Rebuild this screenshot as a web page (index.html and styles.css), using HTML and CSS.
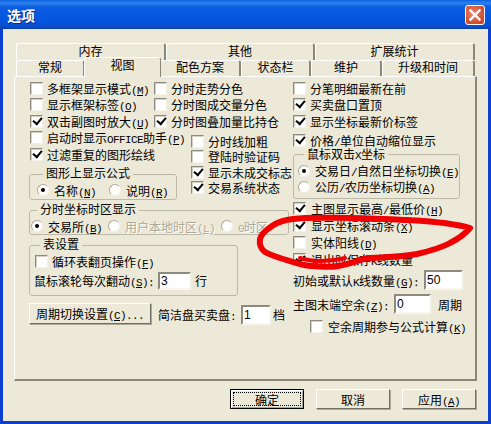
FILE: index.html
```html
<!DOCTYPE html>
<html lang="zh-CN">
<head>
    <meta charset="UTF-8">
    <title>选项</title>
    <link rel="stylesheet" href="styles.css">
</head>
<body>
    <div class="window">
        <div class="titlebar">
            <span class="title">选项</span>
            <span class="close">
                <svg width="20" height="20" viewBox="0 0 20 20"><path d="M5.5 5.5L14.5 14.5M14.5 5.5L5.5 14.5" stroke="#fff" stroke-width="2.4" stroke-linecap="square"/></svg>
            </span>
        </div>

        <div class="client">
            <div class="tabs tabs-back">
                <div class="tab">内存</div>
                <div class="tab">其他</div>
                <div class="tab">扩展统计</div>
            </div>
            <div class="tabs tabs-front">
                <div class="tab">常规</div>
                <div class="tab active">视图</div>
                <div class="tab">配色方案</div>
                <div class="tab">状态栏</div>
                <div class="tab">维护</div>
                <div class="tab">升级和时间</div>
            </div>

            <div class="panel">
                <div class="col-left">
                    <div class="top-grid">
                        <div class="check"><span class="box"></span><span>多框架显示模式<span class="key">(<u>M</u>)</span></span></div>
                        <div class="check"><span class="box"></span><span>分时走势分色</span></div>
                        <div class="check"><span class="box"></span><span>显示框架标签<span class="key">(<u>O</u>)</span></span></div>
                        <div class="check"><span class="box"></span><span>分时图成交量分色</span></div>
                        <div class="check"><span class="box on"></span><span>双击副图时放大<span class="key">(<u>U</u>)</span></span></div>
                        <div class="check"><span class="box on"></span><span>分时图叠加量比持仓</span></div>
                    </div>

                    <div class="lower">
                        <div class="lower-left">
                            <div class="check"><span class="box"></span><span>启动时显示<span class="key">OFFICE</span>助手<span class="key">(<u>P</u>)</span></span></div>
                            <div class="check"><span class="box on"></span><span>过滤重复的图形绘线</span></div>
                            <fieldset class="group group-formula">
                                <legend>图形上显示公式</legend>
                                <div class="radios">
                                    <div class="radio-item w-name"><span class="radio on"></span><span>名称<span class="key">(<u>N</u>)</span></span></div>
                                    <div class="radio-item"><span class="radio"></span><span>说明<span class="key">(<u>R</u>)</span></span></div>
                                </div>
                            </fieldset>
                        </div>
                        <div class="lower-right">
                            <div class="check"><span class="box"></span><span>分时线加粗</span></div>
                            <div class="check"><span class="box"></span><span>登陆时验证码</span></div>
                            <div class="check"><span class="box on"></span><span>显示未成交标志</span></div>
                            <div class="check"><span class="box on"></span><span>交易系统状态</span></div>
                        </div>
                    </div>

                    <fieldset class="group group-zone">
                        <legend>分时坐标时区显示</legend>
                        <div class="radios">
                            <div class="radio-item w-exch"><span class="radio on"></span><span>交易所<span class="key">(<u>B</u>)</span></span></div>
                            <div class="radio-item w-local disabled"><span class="radio"></span><span>用户本地时区<span class="key">(<u>L</u>)</span></span></div>
                            <div class="radio-item disabled"><span class="radio"></span><span><span class="key">0</span>时区</span></div>
                        </div>
                    </fieldset>

                    <fieldset class="group group-table">
                        <legend>表设置</legend>
                        <div class="check"><span class="box"></span><span>循环表翻页操作<span class="key">(<u>F</u>)</span></span></div>
                        <div class="field-row"><span class="label-wheel">鼠标滚轮每次翻动<span class="key">(<u>S</u>):</span></span><input class="num num-wheel" value="3"><span class="unit">行</span></div>
                    </fieldset>

                    <div class="cycle-row">
                        <button class="btn btn-cycle">周期切换设置<span class="key">(<u>C</u>)...</span></button>
                        <span class="cycle-label">简洁盘买卖盘<span class="key">:</span></span>
                        <input class="num num-depth" value="1">
                        <span class="unit">档</span>
                    </div>
                </div>

                <div class="col-right">
                    <div class="check"><span class="box"></span><span>分笔明细最新在前</span></div>
                    <div class="check"><span class="box on"></span><span>买卖盘口置顶</span></div>
                    <div class="check"><span class="box on"></span><span>显示坐标最新价标签</span></div>
                    <div class="check price"><span class="box on"></span><span>价格<span class="key">/</span>单位自动缩位显示</span></div>

                    <fieldset class="group group-dbl">
                        <legend>鼠标双击<span class="key">X</span>坐标</legend>
                        <div class="radio-item"><span class="radio on"></span><span>交易日<span class="key">/</span>自然日坐标切换<span class="key">(<u>E</u>)</span></span></div>
                        <div class="radio-item"><span class="radio"></span><span>公历<span class="key">/</span>农历坐标切换<span class="key">(<u>A</u>)</span></span></div>
                    </fieldset>

                    <div class="right-checks">
                        <div class="check"><span class="box on"></span><span>主图显示最高<span class="key">/</span>最低价<span class="key">(<u>H</u>)</span></span></div>
                        <div class="check"><span class="box on"></span><span>显示坐标滚动条<span class="key">(<u>X</u>)</span></span></div>
                        <div class="check"><span class="box"></span><span>实体阳线<span class="key">(<u>D</u>)</span></span></div>
                        <div class="check"><span class="box on"></span><span>退出时保存<span class="key">K</span>线数量</span></div>
                    </div>

                    <div class="field-row row-kline"><span class="label-kline">初始或默认<span class="key">K</span>线数量<span class="key">(<u>G</u>):</span></span><input class="num num-kline" value="50"></div>
                    <div class="field-row row-space"><span class="label-space">主图末端空余<span class="key">(<u>Z</u>):</span></span><input class="num num-space" value="0"><span class="unit">周期</span></div>
                    <div class="check row-calc"><span class="box"></span><span>空余周期参与公式计算<span class="key">(<u>K</u>)</span></span></div>
                </div>
            </div>

            <div class="dialog-buttons">
                <button class="btn btn-default"><span class="focus">确定</span></button>
                <button class="btn">取消</button>
                <button class="btn">应用<span class="key">(<u>A</u>)</span></button>
            </div>
        </div>

        <!-- 手绘红圈 -->
        <svg class="scribble" width="491" height="424" viewBox="0 0 491 424">
            <path d="M470 228C450 222 425 221 407 220C385 219 365 218 350 218C330 218 310 217 293 219C283 220 278 222 272 226C266 230 261 234 260 239C259 245 261 249 265 252C272 256 283 259 293 262C300 264 305 266 312 266C320 266 328 268 338 266C350 264 358 260 368 258C385 257 402 257 417 254C430 251 441 248 450 243C458 239 465 234 470 228Z" fill="none" stroke="#f00000" stroke-width="6" stroke-linejoin="round"/>
            <path d="M300 258C312 262 330 262 345 258" fill="none" stroke="#f00000" stroke-width="4" stroke-linecap="round"/>
        </svg>
    </div>
</body>
</html>
```

FILE: styles.css
```css
* {
    box-sizing: border-box;
}

body {
    margin: 0;
    background: #0831d9;
    font-family: "Liberation Sans", "Noto Sans CJK SC", sans-serif;
    font-size: 12px;
    color: #000;
}

.key {
    font-family: "Liberation Mono", monospace;
    font-size: 11px;
    letter-spacing: -0.6px;
}

.window {
    position: relative;
    width: 491px;
    height: 424px;
    overflow: hidden;
    display: flex;
    flex-direction: column;
    background: #0a3fd0;
}

.titlebar {
    height: 29px;
    flex: none;
    display: flex;
    align-items: center;
    justify-content: space-between;
    padding: 0 6px 0 7px;
    background: linear-gradient(to bottom, #0a5fe0 0, #2f83ee 3px, #0a5ce0 7px, #0455e0 20px, #0b4fd0 26px, #0a3fb0 29px);
}

.title {
    font-size: 14px;
    font-weight: bold;
    color: #fff;
    text-shadow: 1px 1px 0 #0a2a8a;
}

.close {
    width: 20px;
    height: 20px;
    margin-top: 1px;
    border: 1px solid #fff;
    border-radius: 3px;
    background: radial-gradient(circle at 40% 40%, #e8866a, #d2472a 75%);
    display: flex;
    align-items: center;
    justify-content: center;
}

.close svg {
    flex: none;
}

.client {
    flex: 1;
    margin: 0 3px 3px;
    padding: 14px 11px 0;
    background: #ece9d8;
    display: flex;
    flex-direction: column;
}

/* 标签页 */
.tabs {
    display: grid;
    margin-left: 2px;
    width: 459px;
}

.tabs-back {
    height: 17px;
    grid-template-columns: 150px 149px 160px;
}

.tabs-front {
    height: 16px;
    grid-template-columns: 69px 75px 81px 70px 71px 93px;
    position: relative;
    z-index: 1;
}

.tab {
    display: flex;
    align-items: center;
    justify-content: center;
    line-height: 13px;
    background: #ece9d8;
    border-top: 1px solid #fff;
    border-left: 1px solid #fff;
    border-right: 2px solid #8a8778;
    border-radius: 3px 3px 0 0;
}

.tab.active {
    margin: -3px -1px -1px -1px;
    border-right: 1px solid #8a8778;
    padding-bottom: 3px;
    position: relative;
}

.panel {
    width: 463px;
    height: 305px;
    padding: 3px 0 0 14px;
    display: flex;
    gap: 3px;
    border-top: 1px solid #fff;
    border-left: 1px solid #fff;
    border-right: 2px solid #8a8778;
    border-bottom: 2px solid #8a8778;
}

.col-left {
    width: 260px;
    flex: none;
}

.col-right {
    flex: 1;
    min-width: 0;
}

/* 复选框 */
.check {
    height: 16.5px;
    display: flex;
    align-items: center;
    white-space: nowrap;
    padding-left: 1px;
}

.box {
    position: relative;
    flex: none;
    width: 13px;
    height: 13px;
    margin-right: 4px;
    background: #fff;
    border: 1px solid;
    border-color: #8d8b80 #f4f2e8 #f4f2e8 #8d8b80;
    box-shadow: inset 1px 1px 0 #d4d0c4;
}

.box.on::after {
    content: "";
    position: absolute;
    left: 2px;
    top: 1px;
    width: 7px;
    height: 4px;
    border-left: 2px solid #000;
    border-bottom: 2px solid #000;
    transform: rotate(-50deg);
}

.radio {
    position: relative;
    flex: none;
    width: 12px;
    height: 12px;
    margin-right: 5px;
    border-radius: 50%;
    background: #fff;
    border: 1px solid;
    border-color: #aca899 #f4f2e8 #f4f2e8 #aca899;
}

.radio.on::after {
    content: "";
    position: absolute;
    left: 3px;
    top: 3px;
    width: 4px;
    height: 4px;
    border-radius: 50%;
    background: #000;
}

.radio-item {
    height: 16px;
    display: flex;
    align-items: center;
    white-space: nowrap;
}

.radio-item.disabled {
    color: #aca899;
    text-shadow: 1px 1px 0 #fff;
}

.radios {
    display: flex;
}

/* 左栏 */
.top-grid {
    display: grid;
    grid-template-columns: 124px 1fr;
}

.lower {
    display: flex;
}

.lower-left {
    width: 161px;
    flex: none;
}

.lower-right {
    padding-top: 4px;
}

.lower-right .check {
    height: 15.5px;
}

.group {
    margin: 0;
    padding: 0;
    min-width: 0;
    border: 1px solid #bdb9a8;
    border-radius: 3px;
}

.group legend {
    margin-left: 6px;
    padding: 0 3px;
    line-height: 16px;
    height: 16px;
    white-space: nowrap;
}

.group-formula {
    width: 148px;
    margin-top: 3.5px;
    padding: 0 0 1px 7px;
}

.w-name {
    width: 72px;
}

.group-zone {
    width: 260px;
    margin-top: 2px;
    padding: 0 0 0 1px;
}

.w-exch {
    width: 77px;
}

.w-local {
    width: 113px;
}

.group-table {
    width: 209px;
    margin-top: 2px;
    height: 59px;
    padding-left: 4px;
}

.field-row {
    display: flex;
    align-items: center;
    white-space: nowrap;
}

.group-table .field-row {
    height: 18px;
    margin-top: 2px;
}

.label-wheel {
    width: 124px;
}

.label-kline {
    width: 131px;
}

.label-space {
    width: 101px;
}

.num {
    font: inherit;
    height: 18px;
    padding: 0 1px;
    background: #fff;
    border: 2px solid;
    border-color: #8d8b80 #f8f6ee #f8f6ee #8d8b80;
    outline: none;
}

.num-wheel {
    width: 33px;
}

.unit {
    margin-left: 4px;
}

.cycle-row {
    display: flex;
    align-items: flex-start;
    margin-top: 7px;
}

.btn {
    font: inherit;
    color: #000;
    width: 74px;
    height: 20px;
    padding: 0;
    white-space: nowrap;
    background: #ece9d8;
    border: 1px solid;
    border-color: #fff #716f64 #716f64 #fff;
    box-shadow: 1px 1px 0 #aca899;
}

.btn-cycle {
    width: 122px;
    height: 21px;
}

.cycle-label {
    margin: 3px 0 0 7px;
    width: 83px;
    white-space: nowrap;
}

.num-depth {
    width: 30px;
    height: 20px;
    margin-top: 2px;
}

.cycle-row .unit {
    margin: 3px 0 0 2px;
}

/* 右栏 */
.price {
    margin-top: 2.5px;
}

.group-dbl {
    width: 167px;
    margin: -2px 0 0 1px;
    height: 52px;
    padding-left: 4px;
}

.right-checks {
    margin-top: 1.5px;
}

.right-checks .box {
    margin-right: 5px;
}

.right-checks .check {
    height: 17px;
}

.row-kline {
    height: 20px;
    margin-top: 2px;
    margin-left: 1px;
}

.num-kline {
    width: 39px;
    height: 20px;
}

.row-space {
    height: 20px;
    margin-top: 4px;
    margin-left: 1px;
}

.num-space {
    width: 37px;
    height: 20px;
}

.row-space .unit {
    margin-left: 7px;
}

.row-calc {
    margin-top: 4px;
    padding-left: 18px;
}

.row-calc .box {
    margin-right: 5px;
}

/* 底部按钮 */
.dialog-buttons {
    display: flex;
    justify-content: flex-end;
    gap: 12px;
    margin-top: 8px;
    padding-right: 1px;
}

.btn-default {
    border: 1px solid #000;
    box-shadow: inset 1px 1px 0 #fff, inset -1px -1px 0 #aca899;
    padding: 2px;
}

.focus {
    display: flex;
    align-items: center;
    justify-content: center;
    height: 100%;
    border: 1px dotted #000;
}

.scribble {
    position: absolute;
    left: 0;
    top: 0;
    pointer-events: none;
}
```
